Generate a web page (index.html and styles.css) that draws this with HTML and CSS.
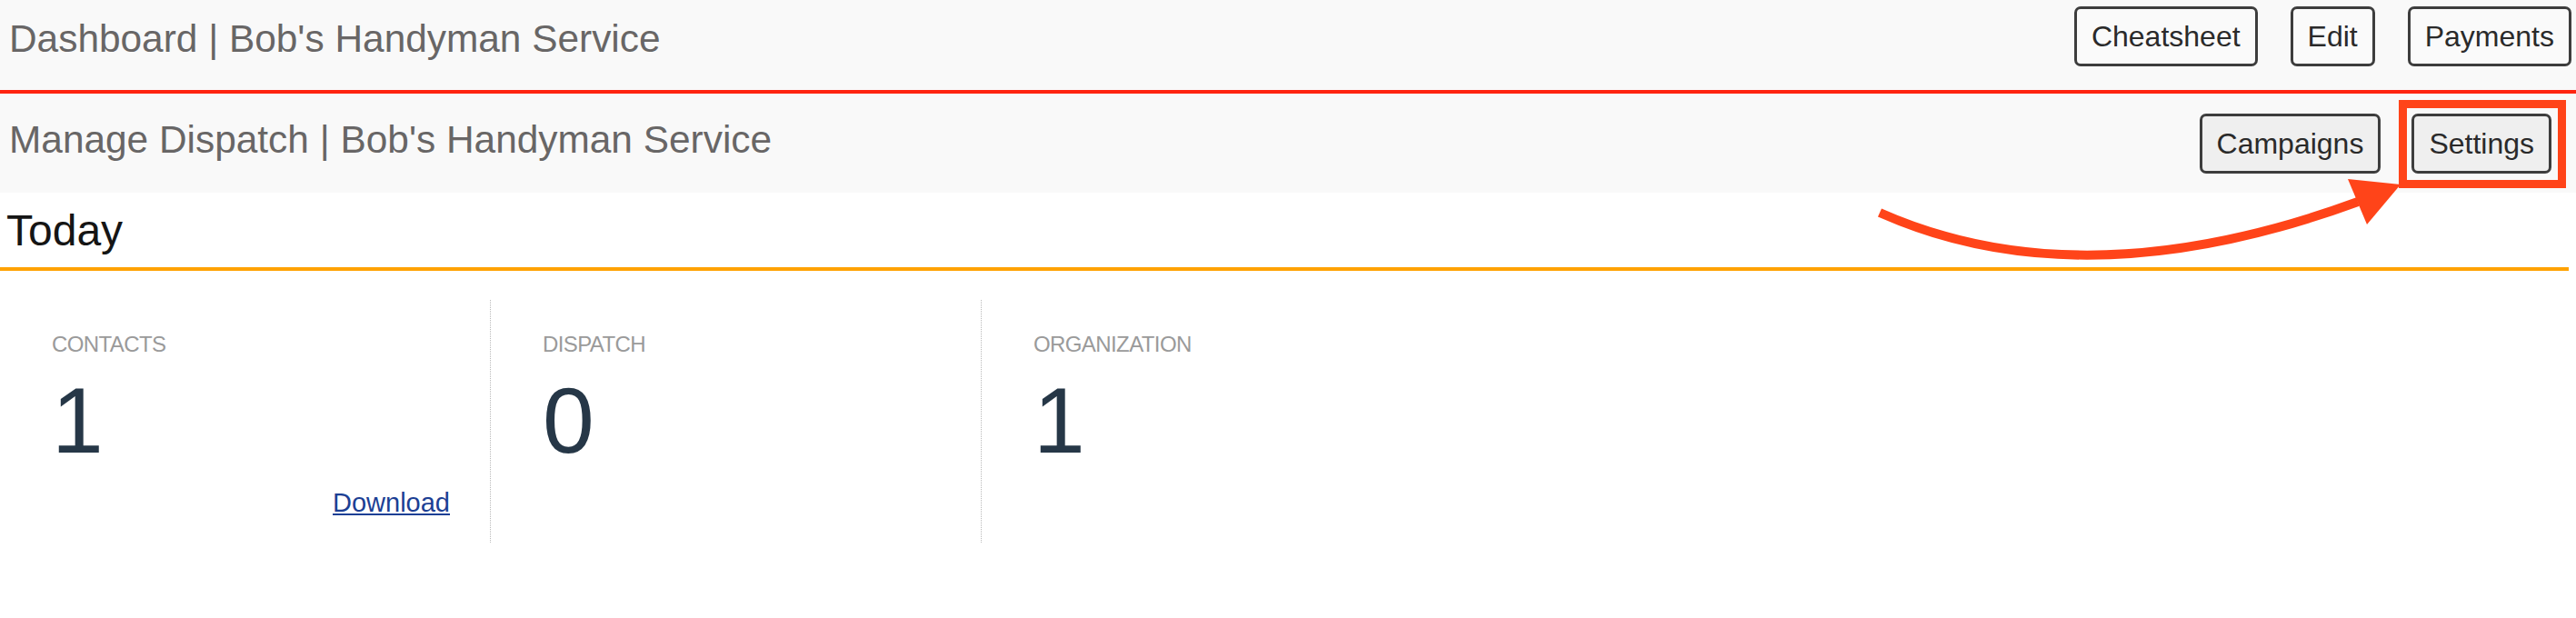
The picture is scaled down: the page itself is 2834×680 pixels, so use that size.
FILE: index.html
```html
<!DOCTYPE html>
<html lang="en">
<head>
<meta charset="utf-8">
<title>Manage Dispatch | Bob's Handyman Service</title>
<link rel="stylesheet" href="styles.css">
</head>
<body>
  <header class="topbar">
    <h1 class="page-title">Dashboard | Bob's Handyman Service</h1>
    <nav class="actions actions-top">
      <button class="btn">Cheatsheet</button>
      <button class="btn">Edit</button>
      <button class="btn">Payments</button>
    </nav>
  </header>
  <header class="subbar">
    <h1 class="page-title sub-title">Manage Dispatch | Bob's Handyman Service</h1>
    <nav class="actions actions-sub">
      <button class="btn btn-filled">Campaigns</button>
      <button class="btn btn-filled">Settings</button>
    </nav>
  </header>
  <section class="today">
    <h2 class="today-title">Today</h2>
  </section>
  <section class="stats">
    <div class="stat">
      <div class="stat-label">Contacts</div>
      <div class="stat-value">1</div>
      <div class="stat-link"><a href="#">Download</a></div>
    </div>
    <div class="stat">
      <div class="stat-label">Dispatch</div>
      <div class="stat-value">0</div>
    </div>
    <div class="stat">
      <div class="stat-label">Organization</div>
      <div class="stat-value">1</div>
    </div>
  </section>
  <svg class="annotation" width="2834" height="680" viewBox="0 0 2834 680" aria-hidden="true">
    <rect x="2643.5" y="114.5" width="175" height="88" fill="none" stroke="#ff4419" stroke-width="9"/>
    <path d="M2068 234 Q2291 333 2594 222" fill="none" stroke="#ff4419" stroke-width="10"/>
    <polygon points="2583,197 2641,203 2604,247" fill="#ff4419"/>
  </svg>
</body>
</html>
```
FILE: styles.css
```css
html, body {
  margin: 0;
  padding: 0;
  background: #ffffff;
}

body {
  position: relative;
  width: 2834px;
  height: 680px;
  overflow: hidden;
  font-family: "Liberation Sans", Arial, sans-serif;
  color: #222;
}

.topbar,
.subbar {
  display: flex;
  justify-content: space-between;
  align-items: center;
  box-sizing: border-box;
  background: #f9f9f9;
}

.topbar {
  height: 103px;
  padding: 0 5px 19px 10px;
  border-bottom: 4px solid #ff2410;
}

.subbar {
  height: 109px;
  padding: 1px 27px 0 10px;
}

.page-title {
  align-self: flex-start;
  margin: 19px 0 0;
  font-size: 42.4px;
  line-height: 48px;
  font-weight: 400;
  color: #686666;
  white-space: nowrap;
}

.sub-title {
  margin-top: 26px;
}

.actions {
  display: flex;
  align-items: center;
}

.actions-top {
  gap: 36px;
}

.actions-sub {
  gap: 34px;
}

.btn {
  font-family: "Liberation Sans", Arial, sans-serif;
  font-size: 32px;
  line-height: 36px;
  padding: 12px 16px;
  border: 3px solid #3d3d3d;
  border-radius: 7px;
  background: #fafafa;
  color: #2a2a2a;
  cursor: pointer;
}

.btn-filled {
  background: #efefef;
}

.today {
  margin-right: 8px;
  padding: 14px 7px 12px;
  border-bottom: 4px solid #ffa200;
}

.today-title {
  margin: 0;
  font-size: 48px;
  line-height: 56px;
  font-weight: 400;
  color: #151515;
}

.stats {
  display: grid;
  grid-template-columns: repeat(3, 540px);
  margin-top: 32px;
}

.stat {
  box-sizing: border-box;
  height: 267px;
  padding: 35px 44px 0 57px;
  border-right: 1px dotted #b9b9b9;
}

.stat:last-child {
  border-right: none;
}

.stat-label {
  font-size: 24px;
  line-height: 28px;
  letter-spacing: -0.6px;
  text-transform: uppercase;
  color: #9a9a9a;
}

.stat-value {
  margin-top: 19px;
  font-size: 102px;
  line-height: 102px;
  color: #263747;
}

.stat-link {
  margin-top: 22px;
  text-align: right;
  font-size: 29px;
  line-height: 34px;
}

.stat-link a {
  color: #1c3f94;
  text-decoration: underline;
}

.annotation {
  position: absolute;
  top: 0;
  left: 0;
  pointer-events: none;
}
```
